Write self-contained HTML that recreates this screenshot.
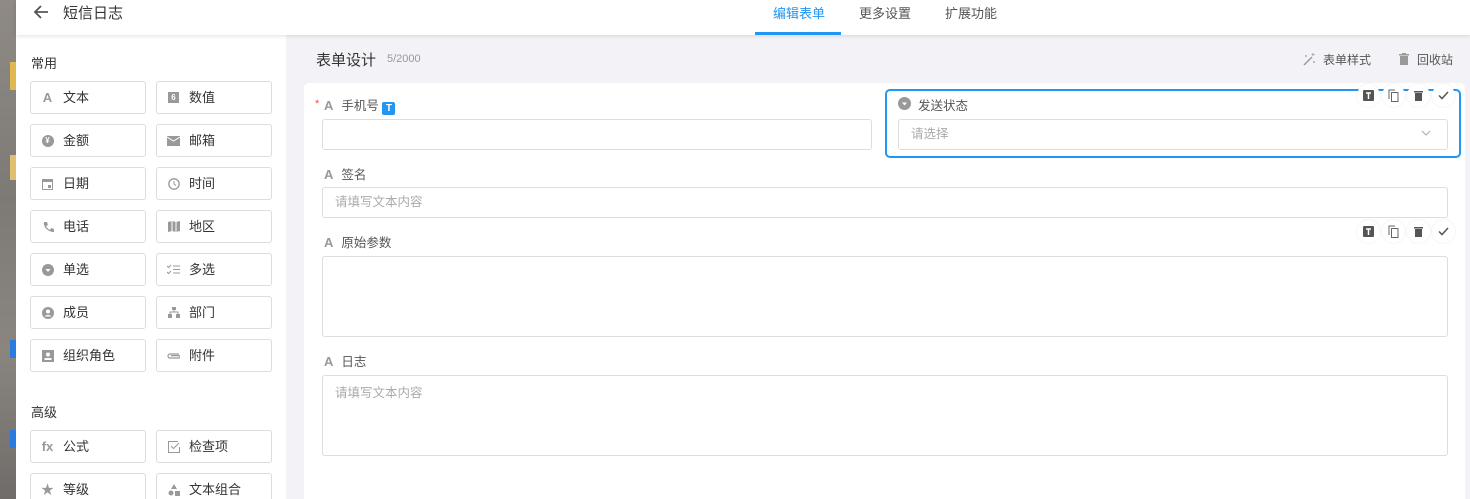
<!DOCTYPE html>
<html><head><meta charset="utf-8">
<style>
*{box-sizing:border-box;margin:0;padding:0}
html{width:1470px;height:499px;overflow:hidden}
body{width:1470px;height:499px;overflow:hidden;position:relative;background:#f3f3f7;font-family:"Liberation Sans","Noto Sans CJK SC",sans-serif;color:#333}
.a{position:absolute}
.desk{left:0;top:0;width:16px;height:499px;background:linear-gradient(180deg,#8f8a84,#7d7a76 40%,#8a857f 70%,#6f6c69)}
.hdr{left:16px;top:0;width:1454px;height:35px;background:#fff;box-shadow:0 1px 4px rgba(0,0,0,.12);z-index:2}
.side{left:16px;top:35px;width:270px;height:464px;background:#fff}
.sec{font-size:13px;color:#333}
.btn{width:116px;height:33px;border:1px solid #ddd;border-radius:3px;background:#fff;font-size:13px;color:#333;line-height:31px;padding-left:32px}
.btn .ic{position:absolute;left:10px;top:9px;width:13px;height:13px;display:flex;align-items:center;justify-content:center;color:#999;font-size:13px;font-weight:bold}
.card{left:304px;top:83px;width:1161px;height:430px;background:#fff;border-radius:5px}
.lbl{font-size:12.5px;color:#555}
.lbl b{color:#999;font-size:13px;margin-right:8px}
.inp{border:1px solid #ddd;border-radius:3px;background:#fff;font-size:12.5px;color:#aaa;padding-left:12px}
.tb{width:23px;height:23px;border-radius:50%;background:#fff;box-shadow:0 0 2px rgba(0,0,0,.1);display:flex;align-items:center;justify-content:center}
</style></head><body>
<div class="a desk">
<div class="a" style="left:10px;top:62px;width:6px;height:28px;background:#e0b850"></div>
<div class="a" style="left:10px;top:155px;width:6px;height:25px;background:#e0c070"></div>
<div class="a" style="left:10px;top:340px;width:6px;height:18px;background:#2a7be0"></div>
<div class="a" style="left:10px;top:430px;width:6px;height:18px;background:#2a7be0"></div>
</div>
<div class="a hdr">
<svg class="a" style="left:16px;top:3px" width="18" height="18" viewBox="0 0 18 18"><path d="M16 9H3M9 3L3 9l6 6" fill="none" stroke="#555" stroke-width="1.8"/></svg>
<div class="a" style="left:47px;top:2px;font-size:15px;color:#333">短信日志</div>
<div class="a" style="left:757px;top:3px;font-size:13px;color:#2196f3">编辑表单</div>
<div class="a" style="left:843px;top:3px;font-size:13px;color:#555">更多设置</div>
<div class="a" style="left:929px;top:3px;font-size:13px;color:#555">扩展功能</div>
<div class="a" style="left:739px;top:32px;width:86px;height:3px;background:#2196f3"></div>
</div>
<div class="a side"></div>
<div class="a sec" style="left:31px;top:53px">常用</div>
<div class="a sec" style="left:31px;top:402px">高级</div>

<div class="a btn" style="left:30px;top:81px"><span class="ic">A</span>文本</div>
<div class="a btn" style="left:156px;top:81px"><span class="ic"><span style="width:11px;height:11px;background:#999;color:#fff;font-size:8px;line-height:11px;text-align:center">6</span></span>数值</div>
<div class="a btn" style="left:30px;top:124px"><span class="ic"><span style="width:12px;height:12px;border-radius:50%;background:#999;color:#fff;font-size:8px;line-height:12px;text-align:center">¥</span></span>金额</div>
<div class="a btn" style="left:156px;top:124px"><span class="ic"><svg width="13" height="10"><rect width="13" height="10" fill="#999"/><path d="M0 1l6.5 4L13 1" stroke="#fff" fill="none"/></svg></span>邮箱</div>
<div class="a btn" style="left:30px;top:167px"><span class="ic"><svg width="11" height="12"><rect x=".5" y="1.5" width="10" height="10" fill="none" stroke="#999"/><rect x="0" y="1" width="11" height="3" fill="#999"/><rect x="6" y="7" width="3" height="3" fill="#999"/></svg></span>日期</div>
<div class="a btn" style="left:156px;top:167px"><span class="ic"><svg width="12" height="12"><circle cx="6" cy="6" r="5.2" fill="none" stroke="#999" stroke-width="1.3"/><path d="M6 3v3l2 1.5" stroke="#999" fill="none"/></svg></span>时间</div>
<div class="a btn" style="left:30px;top:210px"><span class="ic"><svg width="12" height="12"><path d="M2 1l3 0 1 3-2 1c1 2 2 3 4 4l1-2 3 1v3C6 11 1 6 2 1z" fill="#999"/></svg></span>电话</div>
<div class="a btn" style="left:156px;top:210px"><span class="ic"><svg width="12" height="11"><path d="M0 1l4-1 4 1 4-1v10l-4 1-4-1-4 1z" fill="#999"/><path d="M4 0v10M8 1v10" stroke="#fff"/></svg></span>地区</div>
<div class="a btn" style="left:30px;top:253px"><span class="ic"><svg width="12" height="12"><circle cx="6" cy="6" r="6" fill="#999"/><path d="M3.5 5h5L6 8z" fill="#fff"/></svg></span>单选</div>
<div class="a btn" style="left:156px;top:253px"><span class="ic"><svg width="13" height="11"><path d="M0 2l1.5 1.5L4 1M0 8l1.5 1.5L4 7M6 2h7M6 5.5h7M6 9h7" stroke="#999" fill="none"/></svg></span>多选</div>
<div class="a btn" style="left:30px;top:296px"><span class="ic"><svg width="12" height="12"><circle cx="6" cy="6" r="6" fill="#999"/><circle cx="6" cy="4.5" r="2" fill="#fff"/><path d="M2.5 9.5c1-2 6-2 7 0" fill="#fff"/></svg></span>成员</div>
<div class="a btn" style="left:156px;top:296px"><span class="ic"><svg width="12" height="11"><rect x="4" y="0" width="4" height="3" fill="#999"/><rect x="0" y="7" width="4" height="4" fill="#999"/><rect x="8" y="7" width="4" height="4" fill="#999"/><path d="M6 3v2M2 7V5h8v2" stroke="#999" fill="none"/></svg></span>部门</div>
<div class="a btn" style="left:30px;top:339px"><span class="ic"><svg width="12" height="12"><rect width="12" height="12" fill="#999"/><circle cx="6" cy="4.5" r="2" fill="#fff"/><rect x="2.5" y="8" width="7" height="2" fill="#fff"/></svg></span>组织角色</div>
<div class="a btn" style="left:156px;top:339px"><span class="ic"><svg width="14" height="8"><path d="M12 2H3a2 2 0 000 4h9a1.2 1.2 0 000-2.4H4" stroke="#999" fill="none" stroke-width="1.2"/></svg></span>附件</div>
<div class="a btn" style="left:30px;top:430px"><span class="ic" style="font-size:13px">fx</span>公式</div>
<div class="a btn" style="left:156px;top:430px"><span class="ic"><svg width="12" height="12"><path d="M10 .5H.5v11h11V6" stroke="#999" fill="none"/><path d="M3 5l2.5 2.5L11 2" stroke="#999" fill="none"/></svg></span>检查项</div>
<div class="a btn" style="left:30px;top:473px"><span class="ic">★</span>等级</div>
<div class="a btn" style="left:156px;top:473px"><span class="ic"><svg width="12" height="12"><path d="M6 0l3 5H3z" fill="#999"/><circle cx="3" cy="9" r="2.5" fill="#999"/><rect x="7" y="7" width="5" height="5" fill="#999"/></svg></span>文本组合</div>

<div class="a" style="left:316px;top:49px;font-size:15px;color:#333">表单设计</div>
<div class="a" style="left:387px;top:53px;font-size:11px;color:#999">5/2000</div>
<svg class="a" style="left:1303px;top:53px" width="13" height="13"><path d="M1 12l8-8" stroke="#999" stroke-width="1.5"/><path d="M10 0v3M8.5 1.5h3M3 2v2M2 3h2M11 8v2M10 9h2" stroke="#aaa"/></svg>
<div class="a" style="left:1323px;top:51px;font-size:12px;color:#555">表单样式</div>
<svg class="a" style="left:1399px;top:53px" width="10" height="12"><rect x="1" y="3" width="8" height="9" fill="#999"/><rect x="0" y="1" width="10" height="1.5" fill="#999"/><rect x="3" y="0" width="4" height="1.5" fill="#999"/></svg>
<div class="a" style="left:1417px;top:51px;font-size:12px;color:#555">回收站</div>

<div class="a card"></div>
<div class="a" style="left:315px;top:98px;color:#f44;font-size:11px">*</div>
<div class="a lbl" style="left:324px;top:95px"><b>A</b>手机号 <span style="display:inline-block;width:13px;height:13px;background:#2196f3;color:#fff;font-size:10px;line-height:13px;text-align:center;border-radius:2px;font-weight:bold;vertical-align:-1px">T</span></div>
<div class="a inp" style="left:322px;top:119px;width:550px;height:31px"></div>

<div class="a" style="left:885px;top:89px;width:576px;height:69px;border:2px solid #2196f3;border-radius:5px"></div>
<svg class="a" style="left:898px;top:97px" width="13" height="13"><circle cx="6.5" cy="6.5" r="6.5" fill="#999"/><path d="M4 5.5h5L6.5 8.5z" fill="#fff"/></svg>
<div class="a lbl" style="left:918px;top:95px">发送状态</div>
<div class="a inp" style="left:898px;top:119px;width:550px;height:31px;line-height:29px">请选择</div>
<svg class="a" style="left:1421px;top:130px" width="10" height="7"><path d="M1 1l4 4 4-4" stroke="#aaa" fill="none"/></svg>

<div class="a lbl" style="left:324px;top:164px"><b>A</b>签名</div>
<div class="a inp" style="left:322px;top:187px;width:1126px;height:31px;line-height:29px">请填写文本内容</div>
<div class="a lbl" style="left:324px;top:232px"><b>A</b>原始参数</div>
<div class="a inp" style="left:322px;top:256px;width:1126px;height:81px"></div>
<div class="a lbl" style="left:324px;top:351px"><b>A</b>日志</div>
<div class="a inp" style="left:322px;top:375px;width:1126px;height:81px;padding-top:6px">请填写文本内容</div>

<div class="a" style="left:1357px;top:84px;display:flex;gap:2px">
<div class="tb"><svg width="11" height="11"><rect width="11" height="11" rx="1" fill="#555"/><path d="M3 3h5M5.5 3v6" stroke="#fff" stroke-width="1.5"/></svg></div>
<div class="tb"><svg width="11" height="13"><path d="M1 10V1h6" stroke="#666" fill="none"/><rect x="3.5" y="3.5" width="6.5" height="9" fill="none" stroke="#666"/></svg></div>
<div class="tb"><svg width="9" height="11"><rect x="1" y="3" width="7" height="8" fill="#555"/><rect x="0" y="1" width="9" height="1.5" fill="#555"/></svg></div>
<div class="tb"><svg width="11" height="9"><path d="M1 4.5l3 3L10 1" stroke="#555" stroke-width="1.5" fill="none"/></svg></div>
</div>
<div class="a" style="left:1357px;top:220px;display:flex;gap:2px">
<div class="tb"><svg width="11" height="11"><rect width="11" height="11" rx="1" fill="#555"/><path d="M3 3h5M5.5 3v6" stroke="#fff" stroke-width="1.5"/></svg></div>
<div class="tb"><svg width="11" height="13"><path d="M1 10V1h6" stroke="#666" fill="none"/><rect x="3.5" y="3.5" width="6.5" height="9" fill="none" stroke="#666"/></svg></div>
<div class="tb"><svg width="9" height="11"><rect x="1" y="3" width="7" height="8" fill="#555"/><rect x="0" y="1" width="9" height="1.5" fill="#555"/></svg></div>
<div class="tb"><svg width="11" height="9"><path d="M1 4.5l3 3L10 1" stroke="#555" stroke-width="1.5" fill="none"/></svg></div>
</div>
</body></html>
